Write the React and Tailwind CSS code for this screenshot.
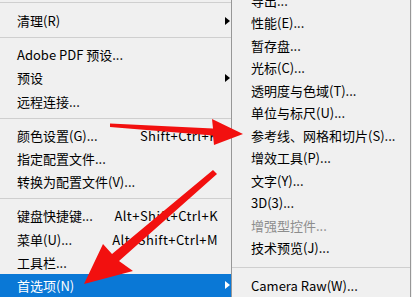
import React from 'react';

const font = { fontFamily: '"Noto Sans CJK SC", "Noto Sans", sans-serif' };

const Sep = ({ tall }) => (
  <div className={tall ? 'h-[15px] pt-[8px]' : 'h-[11px] flex items-center'}>
    <div className="h-px w-full bg-[#cfcfcf]" />
  </div>
);

const Arrow = ({ white }) => (
  <span
    className={`w-0 h-0 border-y-[4.5px] border-y-transparent border-l-[5px] ${
      white ? 'border-l-white' : 'border-l-black'
    }`}
  />
);

const Item = ({ label, shortcut, sub, active, disabled, small }) => (
  <div
    className={`${small ? 'h-[22.5px] pl-[19px]' : 'h-[23.3px] pl-[17px]'} flex items-center text-[13px] leading-none ${
      active ? 'bg-[#0a78d6] text-white' : disabled ? 'text-[#8d8d8d]' : 'text-black'
    }`}
  >
    <span className="whitespace-nowrap">{label}</span>
    {shortcut && <span className="ml-auto pr-[13px] whitespace-nowrap tracking-[0.45px]">{shortcut}</span>}
    {sub && (
      <span className="ml-auto mr-[1px] flex">
        <Arrow white={active} />
      </span>
    )}
  </div>
);

export default function App() {
  return (
    <div className="relative w-[412px] h-[297px] overflow-hidden bg-[#f0f0f0] flex" style={font}>
      {/* main menu */}
      <div className="w-[231px] flex flex-col shrink-0">
        <div className="h-[9px] pt-[2px]">
          <div className="h-px w-full bg-[#cfcfcf]" />
        </div>
        <Item label="清理(R)" sub />
        <Sep />
        <Item label="Adobe PDF 预设..." />
        <Item label="预设" sub />
        <Item label="远程连接..." />
        <Sep />
        <Item label="颜色设置(G)..." shortcut="Shift+Ctrl+K" />
        <Item label="指定配置文件..." />
        <Item label="转换为配置文件(V)..." />
        <Sep />
        <Item label="键盘快捷键..." shortcut="Alt+Shift+Ctrl+K" />
        <Item label="菜单(U)..." shortcut="Alt+Shift+Ctrl+M" />
        <Item label="工具栏..." />
        <Item label="首选项(N)" sub active />
      </div>

      {/* preferences submenu */}
      <div className="w-[180px] shrink-0 border-x border-[#979797] flex flex-col mt-[-11px]">
        <Item small label="导出..." />
        <Item small label="性能(E)..." />
        <Item small label="暂存盘..." />
        <Item small label="光标(C)..." />
        <Item small label="透明度与色域(T)..." />
        <Item small label="单位与标尺(U)..." />
        <Item small label="参考线、网格和切片(S)..." />
        <Item small label="增效工具(P)..." />
        <Item small label="文字(Y)..." />
        <Item small label="3D(3)..." />
        <Item small label="增强型控件..." disabled />
        <Item small label="技术预览(J)..." />
        <Sep tall />
        <Item small label="Camera Raw(W)..." />
      </div>

      {/* red annotation arrows */}
      <svg className="absolute inset-0 pointer-events-none" width="412" height="297" viewBox="0 0 412 297">
        <polygon fill="#f2100f" points="110,123.5 213,128.5 212,119 243,134 214,145 213,135.5 110,127" />
        <polygon fill="#f2100f" points="213,170 217,174 119,261 133,271 84,284 103,244 112,254" />
      </svg>
    </div>
  );
}
